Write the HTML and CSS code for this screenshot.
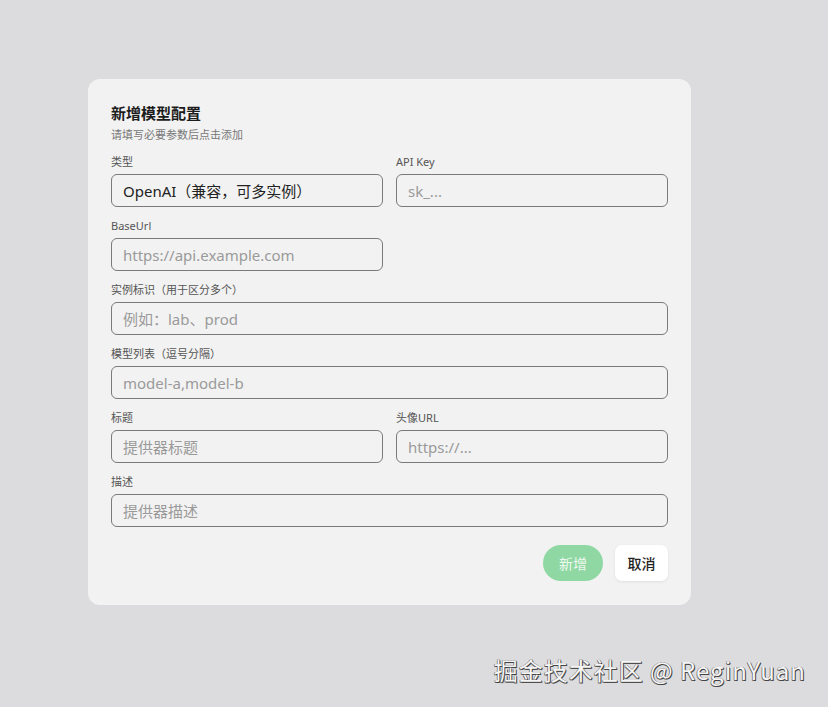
FILE: index.html
```html
<!DOCTYPE html>
<html lang="zh-CN">
<head>
<meta charset="UTF-8">
<meta name="viewport" content="width=device-width, initial-scale=1.0">
<title>新增模型配置</title>
<link rel="stylesheet" href="styles.css">
</head>
<body>
<div class="card">
  <div class="title">新增模型配置</div>
  <div class="subtitle">请填写必要参数后点击添加</div>

  <div class="form">
    <label class="field">
      <span class="label">类型</span>
      <input type="text" value="OpenAI（兼容，可多实例）">
    </label>
    <label class="field">
      <span class="label">API Key</span>
      <input type="text" placeholder="sk_...">
    </label>
    <label class="field">
      <span class="label">BaseUrl</span>
      <input type="text" placeholder="https://api.example.com">
    </label>
    <div></div>
    <label class="field wide">
      <span class="label">实例标识（用于区分多个）</span>
      <input type="text" placeholder="例如：lab、prod">
    </label>
    <label class="field wide">
      <span class="label">模型列表（逗号分隔）</span>
      <input type="text" placeholder="model-a,model-b">
    </label>
    <label class="field">
      <span class="label">标题</span>
      <input type="text" placeholder="提供器标题">
    </label>
    <label class="field">
      <span class="label">头像URL</span>
      <input type="text" placeholder="https://...">
    </label>
    <label class="field wide">
      <span class="label">描述</span>
      <input type="text" placeholder="提供器描述">
    </label>
  </div>

  <div class="actions">
    <button class="btn-add">新增</button>
    <button class="btn-cancel">取消</button>
  </div>
</div>

<div class="watermark">掘金技术社区 @ ReginYuan</div>
</body>
</html>
```

FILE: styles.css
```css
body { margin: 0; background: #dcdcde; font-family: "Noto Sans", "Noto Sans CJK SC", sans-serif; color: #1a1a1a; height: 707px; position: relative; overflow: hidden; }
.card { width: 557px; margin: 79px 0 0 88px; padding: 24px 23px 24px; background: #f2f2f2; border-radius: 12px; }
.title { font-size: 15px; font-weight: 700; line-height: 20px; color: #1c1c1c; }
.subtitle { font-size: 11px; line-height: 16px; color: #777; margin-top: 4px; }
.form { display: grid; grid-template-columns: 272px 272px; column-gap: 13px; row-gap: 12px; margin-top: 12px; }
.field { display: flex; flex-direction: column; gap: 5px; }
.field.wide { grid-column: 1 / 3; }
.label { font-size: 11px; line-height: 14px; color: #555; }
input { box-sizing: border-box; height: 33px; width: 100%; border: 1px solid #7a7a7a; border-radius: 6px; background: #f2f2f2; padding: 0 11px; font-family: "Noto Sans", "Noto Sans CJK SC", sans-serif; font-size: 15px; color: #222; outline: none; }
input::placeholder { color: #9a9a9a; }
.actions { display: flex; justify-content: flex-end; gap: 12px; margin-top: 18px; }
button { font-family: "Noto Sans", "Noto Sans CJK SC", sans-serif; font-size: 14px; border: none; cursor: pointer; height: 36px; }
.btn-add { width: 60px; background: #8fd8a3; color: #eef8f0; border-radius: 18px; }
.btn-cancel { width: 53px; background: #fff; color: #222; border-radius: 7px; box-shadow: 0 1px 3px rgba(0,0,0,0.08); font-weight: 500; }
.watermark { position: absolute; right: 22px; top: 655px; font-size: 24px; line-height: 30px; color: #f5f5f5; font-family: "Noto Sans CJK SC", sans-serif; letter-spacing: 1px; text-shadow: 1px 1px 0 #444, -0.5px -0.5px 0 #666, 0.5px -0.5px 0 #666, -0.5px 0.5px 0 #666; }
```
